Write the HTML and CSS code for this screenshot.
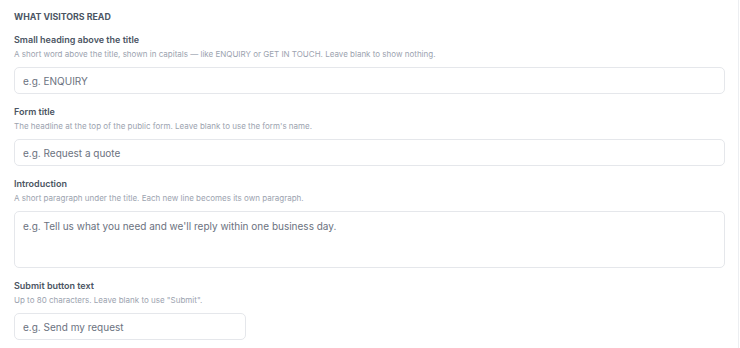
FILE: index.html
```html
<!DOCTYPE html>
<html lang="en">
<head>
    <meta charset="UTF-8">
    <meta name="viewport" content="width=device-width, initial-scale=1.0">
    <title>Form settings</title>
    <link rel="stylesheet" href="styles.css">
</head>
<body>

    <!-- What visitors read -->
    <div class="panel">
        <h3 class="section-title">What visitors read</h3>

        <div class="field">
            <label for="eyebrow">Small heading above the title</label>
            <p class="hint">A short word above the title, shown in capitals — like ENQUIRY or GET IN TOUCH. Leave blank to show nothing.</p>
            <input type="text" id="eyebrow" placeholder="e.g. ENQUIRY">
        </div>

        <div class="field">
            <label for="title">Form title</label>
            <p class="hint">The headline at the top of the public form. Leave blank to use the form's name.</p>
            <input type="text" id="title" placeholder="e.g. Request a quote">
        </div>

        <div class="field">
            <label for="intro">Introduction</label>
            <p class="hint">A short paragraph under the title. Each new line becomes its own paragraph.</p>
            <textarea id="intro" placeholder="e.g. Tell us what you need and we'll reply within one business day."></textarea>
        </div>

        <div class="field">
            <label for="submit-text">Submit button text</label>
            <p class="hint">Up to 80 characters. Leave blank to use "Submit".</p>
            <input type="text" id="submit-text" class="short" placeholder="e.g. Send my request">
        </div>
    </div>

</body>
</html>
```

FILE: styles.css
```css
body {
    margin: 0;
    background: #fff;
    font-family: Inter, "Liberation Sans", Arial, sans-serif;
    color: #374151;
}
.panel {
    width: 739px;
    height: 348px;
    box-sizing: border-box;
    padding: 11px 14px 0 14px;
    border-right: 1px solid #eceef1;
    overflow: hidden;
}
.section-title {
    margin: 0 0 11px 0;
    font-size: 8.8px;
    line-height: 12px;
    font-weight: 700;
    text-transform: uppercase;
    color: #4b5563;
}
.field {
    margin-bottom: 12px;
}
label {
    display: block;
    font-size: 9px;
    line-height: 12px;
    font-weight: 600;
    color: #4b5563;
    margin-bottom: 3px;
}
.hint {
    margin: 0 0 7px 0;
    font-size: 8px;
    line-height: 11px;
    color: #9ca3af;
}
input, textarea {
    display: block;
    width: 711px;
    box-sizing: border-box;
    border: 1px solid #e5e7eb;
    border-radius: 5px;
    background: #fff;
    font-family: inherit;
    font-size: 10px;
    color: #374151;
    padding: 0 8px;
    margin: 0;
    outline: none;
}
input {
    height: 27px;
}
textarea {
    height: 57px;
    padding-top: 7px;
    line-height: 14px;
    resize: none;
    margin-bottom: 4px;
}
input::placeholder, textarea::placeholder {
    color: #6b7280;
}
input.short {
    width: 232px;
}
```
